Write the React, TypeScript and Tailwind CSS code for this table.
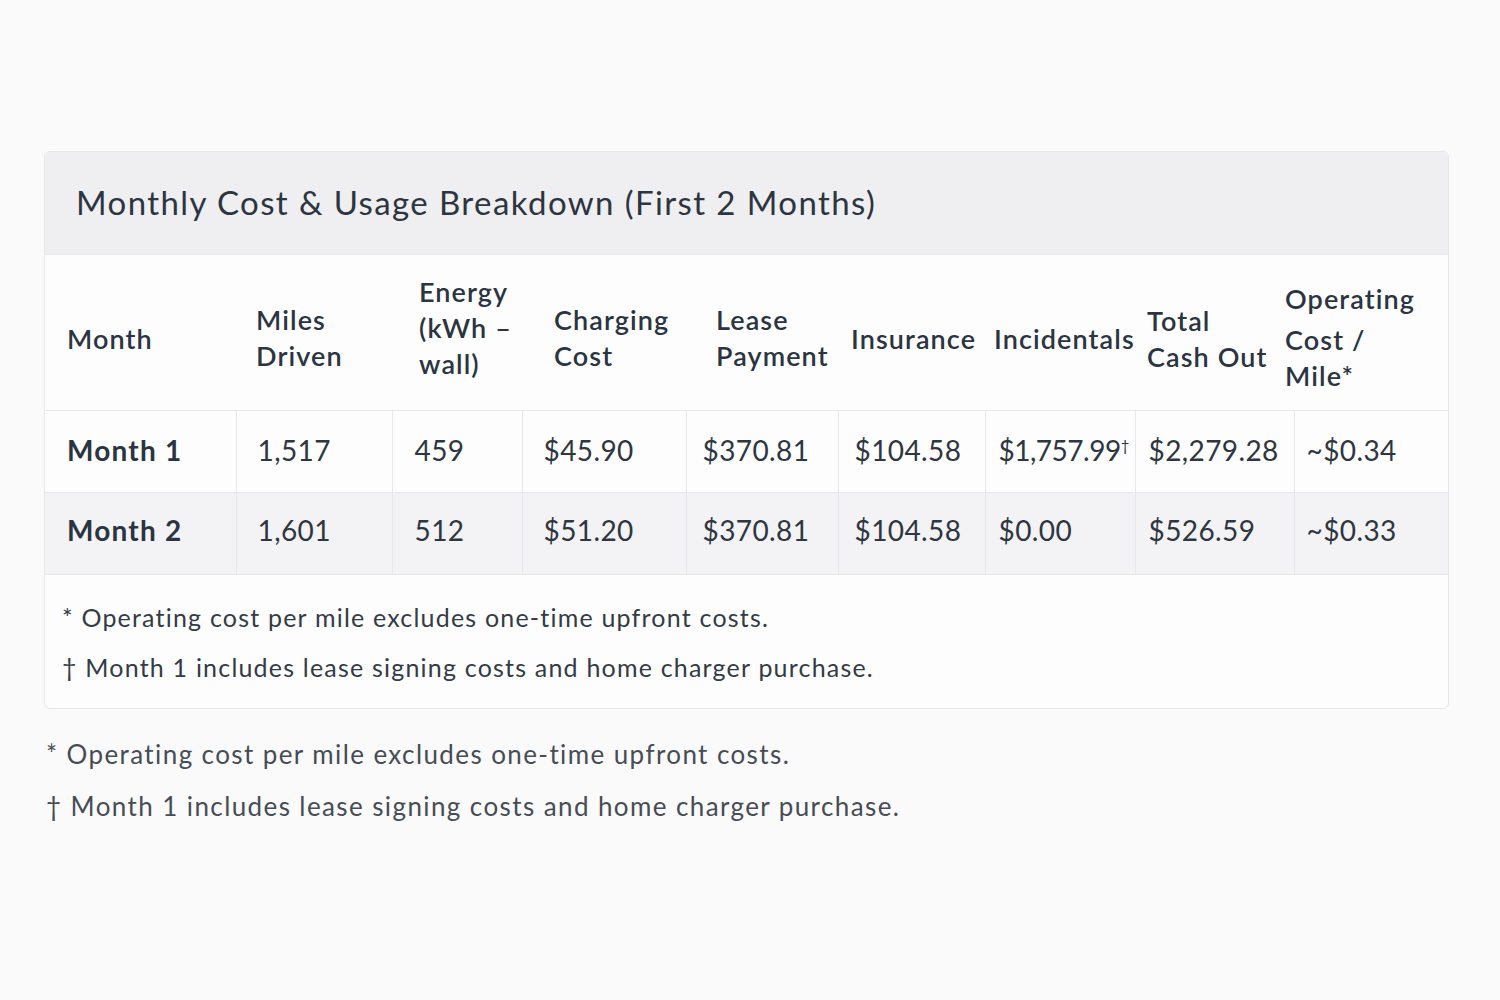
import React from "react";

type Col = { head: string[]; width: number; headPad: string; bodyPad: string };

const cols: Col[] = [
  { head: ["Month"], width: 191, headPad: "pl-[22px] pt-[12px]", bodyPad: "pl-[22px]" },
  { head: ["Miles", "Driven"], width: 156, headPad: "pl-[20px] pr-[34px] pt-[10px] text-center", bodyPad: "pl-[21px]" },
  { head: ["Energy", "(kWh –", "wall)"], width: 130, headPad: "pl-[27px] pb-[10px]", bodyPad: "pl-[22px]" },
  { head: ["Charging", "Cost"], width: 164, headPad: "pl-[32px] pt-[10px]", bodyPad: "pl-[21px]" },
  { head: ["Lease", "Payment"], width: 152, headPad: "pl-[30px] pt-[10px]", bodyPad: "pl-[16px]" },
  { head: ["Insurance"], width: 147, headPad: "pl-[13px] pt-[12px]", bodyPad: "pl-[16px]" },
  { head: ["Incidentals"], width: 150, headPad: "pl-[9px] pt-[12px]", bodyPad: "pl-[13px]" },
  { head: ["Total", "Cash Out"], width: 159, headPad: "pl-[12px] pt-[12px]", bodyPad: "pl-[13px]" },
  { head: ["Operating", "Cost /", "Mile*"], width: 156, headPad: "pl-0 pt-[10px]", bodyPad: "pl-[12px]" },
];

const rows = [
  ["Month 1", "1,517", "459", "$45.90", "$370.81", "$104.58", "$1,757.99", "$2,279.28", "~$0.34"],
  ["Month 2", "1,601", "512", "$51.20", "$370.81", "$104.58", "$0.00", "$526.59", "~$0.33"],
];

const notes = [
  "* Operating cost per mile excludes one-time upfront costs.",
  "† Month 1 includes lease signing costs and home charger purchase.",
];

export default function App() {
  return (
    <div className="min-h-[1000px] bg-[#fafafb] pl-[44px] pr-[51px] pt-[151px] font-['Lato','Noto_Sans',sans-serif] text-[#2b323c]">
      {/* card */}
      <div className="overflow-hidden rounded-md border border-[#e6e7ea] bg-[#fdfdfe]">
        <div className="flex h-[102px] items-center bg-[#efeff2] px-[31px]">
          <h2 className="text-[33px] font-normal tracking-[1.4px] text-[#2d3540]">
            Monthly Cost &amp; Usage Breakdown (First 2 Months)
          </h2>
        </div>

        <table className="w-full table-fixed border-collapse">
          <colgroup>
            {cols.map((c, i) => (
              <col key={i} style={{ width: c.width }} />
            ))}
          </colgroup>
          <thead>
            <tr className="h-[156px] border-y border-[#e6e7ea] bg-[#fdfdfe]">
              {cols.map((c, i) => (
                <th
                  key={i}
                  className={`${c.headPad} text-left align-middle text-[27px] font-semibold leading-[36px] tracking-[1.1px] text-[#2b3440]`}
                >
                  <div className={i === 8 ? "-ml-[9px] whitespace-nowrap" : "whitespace-nowrap"}>
                    {c.head.map((l, j) => (
                      <div key={j} className={i === 8 && j === 1 ? "mt-[5px]" : ""}>
                        {l}
                      </div>
                    ))}
                  </div>
                </th>
              ))}
            </tr>
          </thead>
          <tbody>
            {rows.map((r, ri) => (
              <tr
                key={ri}
                className={`h-[82px] ${ri === 1 ? "bg-[#f3f3f5]" : "bg-[#fdfdfe]"} border-b border-[#e6e7ea]`}
              >
                {r.map((v, ci) => (
                  <td
                    key={ci}
                    className={`${cols[ci].bodyPad} ${ri === 1 ? "pb-[7px]" : "pb-[4px]"} whitespace-nowrap align-middle text-[28px] ${
                      ci === 0
                        ? "font-bold tracking-[1.2px] text-[#2b3440]"
                        : ci === 6 && ri === 0
                          ? "font-normal tracking-[-0.5px] text-[#2f3640]"
                          : "font-normal tracking-[0.4px] text-[#2f3640]"
                    } ${ci > 0 ? "border-l border-[#e6e7ea]" : ""}`}
                  >
                    {v}
                    {ri === 0 && ci === 6 && (
                      <span className="relative -top-[10px] text-[15px] leading-none">†</span>
                    )}
                  </td>
                ))}
              </tr>
            ))}
          </tbody>
        </table>

        <div className="pb-[16px] pl-[17px] pt-[17px]">
          {notes.map((n) => (
            <p key={n} className="text-[25px] leading-[50px] tracking-[1.2px] text-[#343b45]">
              {n}
            </p>
          ))}
        </div>
      </div>

      {/* notes below card */}
      <div className="pl-[2px] pt-[19px]">
        {notes.map((n) => (
          <p key={n} className="text-[26px] leading-[52px] tracking-[1.4px] text-[#474c55]">
            {n}
          </p>
        ))}
      </div>
    </div>
  );
}
